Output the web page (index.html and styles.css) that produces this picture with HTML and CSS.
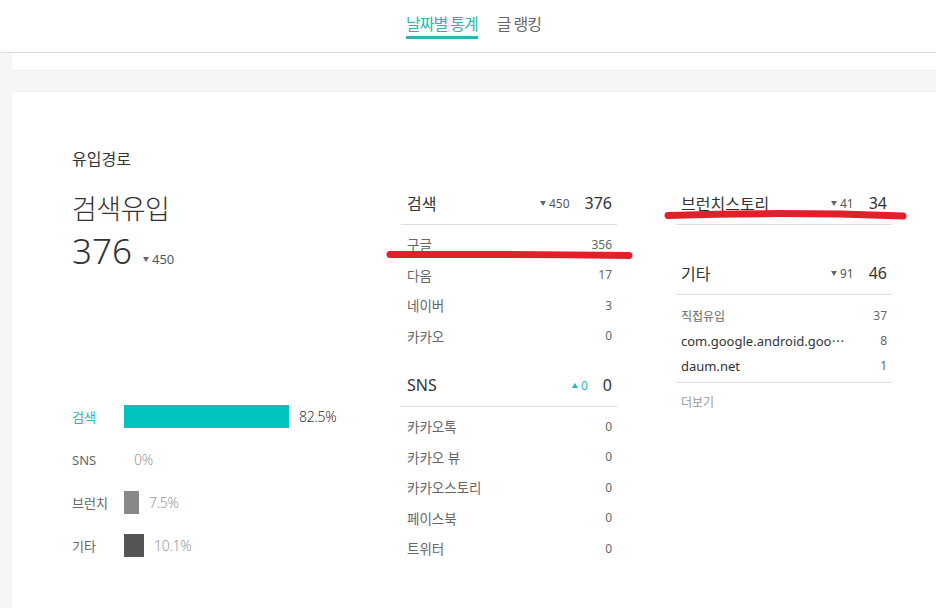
FILE: index.html
```html
<!DOCTYPE html>
<html lang="ko">
<head>
<meta charset="utf-8">
<title>유입경로</title>
<link rel="stylesheet" href="styles.css">
</head>
<body>
<header class="topbar">
  <nav class="tabs">
    <a class="tab active">날짜별 통계</a>
    <a class="tab">글 랭킹</a>
  </nav>
</header>
<main class="page">
  <div class="strip"></div>
  <section class="card">
    <h2 class="card-title">유입경로</h2>
    <div class="cols">
      <div class="summary">
        <div class="sum-label">검색유입</div>
        <div class="sum-value"><span class="big">376</span><span class="delta big-delta">450</span></div>
        <ul class="bars">
          <li class="bar-row hl"><span class="lbl">검색</span><span class="bar teal" style="width:165px"></span><span class="pct dark">82.5%</span></li>
          <li class="bar-row"><span class="lbl">SNS</span><span class="bar" style="width:0"></span><span class="pct">0%</span></li>
          <li class="bar-row"><span class="lbl">브런치</span><span class="bar grey" style="width:15px"></span><span class="pct">7.5%</span></li>
          <li class="bar-row"><span class="lbl">기타</span><span class="bar darkgrey" style="width:20px"></span><span class="pct">10.1%</span></li>
        </ul>
      </div>
      <div class="group mid">
        <div class="sect-head"><span class="name">검색</span><span class="delta">450</span><span class="total">376</span></div>
        <ul class="rows">
          <li><span>구글</span><span class="num">356</span></li>
          <li><span>다음</span><span class="num">17</span></li>
          <li><span>네이버</span><span class="num">3</span></li>
          <li><span>카카오</span><span class="num">0</span></li>
        </ul>
        <div class="sect-head"><span class="name">SNS</span><span class="delta up">0</span><span class="total">0</span></div>
        <ul class="rows">
          <li><span>카카오톡</span><span class="num">0</span></li>
          <li><span>카카오 뷰</span><span class="num">0</span></li>
          <li><span>카카오스토리</span><span class="num">0</span></li>
          <li><span>페이스북</span><span class="num">0</span></li>
          <li><span>트위터</span><span class="num">0</span></li>
        </ul>
      </div>
      <div class="group right">
        <div class="sect-head"><span class="name">브런치스토리</span><span class="delta">41</span><span class="total">34</span></div>
        <ul class="rows empty"></ul>
        <div class="sect-head"><span class="name">기타</span><span class="delta">91</span><span class="total">46</span></div>
        <ul class="rows compact">
          <li><span class="small">직접유입</span><span class="num">37</span></li>
          <li><span class="strong">com.google.android.goo⋯</span><span class="num">8</span></li>
          <li><span class="strong">daum.net</span><span class="num">1</span></li>
        </ul>
        <div class="more">더보기</div>
      </div>
    </div>
  </section>
</main>
<svg class="marks" width="936" height="608" viewBox="0 0 936 608">
  <path d="M390 254.5 Q510 254 629 255.5" />
  <path d="M668 215.5 Q785 211.5 903 216" />
</svg>
</body>
</html>
```
FILE: styles.css
```css
* { box-sizing: border-box; margin: 0; padding: 0; }

body {
  font-family: "Noto Sans", "Noto Sans CJK KR", sans-serif;
  background: #f6f6f6;
  color: #333;
  width: 936px;
  height: 608px;
  overflow: hidden;
  position: relative;
}

.topbar {
  height: 53px;
  background: #fff;
  border-bottom: 1px solid #dedede;
  display: flex;
  justify-content: center;
}

.tabs {
  display: flex;
  gap: 19px;
  padding-left: 11px;
}

.tab {
  display: block;
  padding-top: 13px;
  line-height: 23px;
  font-size: 16px;
  letter-spacing: -1px;
  color: #666;
  border-bottom: 3px solid transparent;
  height: 39px;
}

.tab.active {
  color: #2db5ad;
  border-bottom-color: #2db5ad;
}

.strip {
  margin-left: 12px;
  height: 18px;
  background: #fff;
  border-bottom: 1px solid #ececec;
}

.card {
  margin: 20px 0 0 12px;
  background: #fff;
  border-top: 1px solid #eeeeee;
  padding: 55px 0 0 60px;
  height: 520px;
}

.card-title {
  font-size: 16px;
  line-height: 24px;
  font-weight: 400;
  color: #333;
}

.cols {
  display: flex;
  margin-top: 13px;
}

.summary { width: 329px; }

.sum-label {
  margin-top: 5px;
  font-size: 27px;
  line-height: 40px;
  font-weight: 300;
  letter-spacing: -0.5px;
  color: #333;
}

.sum-value {
  display: flex;
  align-items: baseline;
  line-height: 44px;
}

.big {
  font-size: 35px;
  font-weight: 300;
  color: #333;
}

.delta {
  font-size: 12px;
  color: #555;
}

.delta::before {
  content: "";
  display: inline-block;
  border-left: 3px solid transparent;
  border-right: 3px solid transparent;
  border-top: 5px solid #666;
  margin-right: 3px;
  vertical-align: 2px;
}

.delta.up { color: #1fbcb4; }
.delta.up::before {
  border-top: 0;
  border-bottom: 5px solid #1fbcb4;
}

.big-delta {
  font-size: 13px;
  margin-left: 11px;
}

.bars {
  list-style: none;
  margin-top: 114px;
}

.bar-row {
  display: flex;
  align-items: center;
  height: 43px;
}

.lbl {
  width: 52px;
  font-size: 13px;
  color: #666;
}

.bar-row.hl .lbl { color: #1fb6b0; }

.bar { display: block; height: 23px; }
.bar.teal { background: #00c4bc; }
.bar.grey { background: #888; }
.bar.darkgrey { background: #555; }

.pct {
  margin-left: 10px;
  font-size: 14px;
  font-weight: 300;
  color: #999;
  letter-spacing: -0.3px;
}

.pct.dark { color: #333; }

.group { width: 216px; }
.group.right { margin-left: 59px; }

.sect-head {
  display: flex;
  align-items: center;
  height: 41px;
  border-bottom: 1px solid #dedede;
  padding: 0 5px 2px 6px;
}

.group.right .sect-head { padding-left: 5px; }

.sect-head .name {
  flex: 1;
  font-size: 16px;
  color: #333;
}

.sect-head .delta { margin-right: 15px; }

.sect-head .total {
  font-size: 16px;
  color: #333;
}

.rows {
  list-style: none;
  padding: 4px 5px 15px 6px;
}

.rows li {
  display: flex;
  justify-content: space-between;
  align-items: center;
  height: 30.5px;
  font-size: 13.5px;
  color: #666;
}

.rows .num { font-size: 12px; color: #666; }

.rows.empty { height: 29px; padding: 0; }

.rows.compact {
  padding: 8px 5px 4px 5px;
  border-bottom: 1px solid #dedede;
}

.rows.compact li { height: 25px; }
.rows.compact .small { font-size: 12px; color: #666; }
.rows.compact .strong { font-size: 13px; color: #333; }

.more {
  padding: 10px 5px 0;
  font-size: 12px;
  line-height: 20px;
  color: #999;
}

.marks {
  position: absolute;
  top: 0;
  left: 0;
  pointer-events: none;
}

.marks path {
  fill: none;
  stroke: #e21f2a;
  stroke-width: 7;
  stroke-linecap: round;
}
```
